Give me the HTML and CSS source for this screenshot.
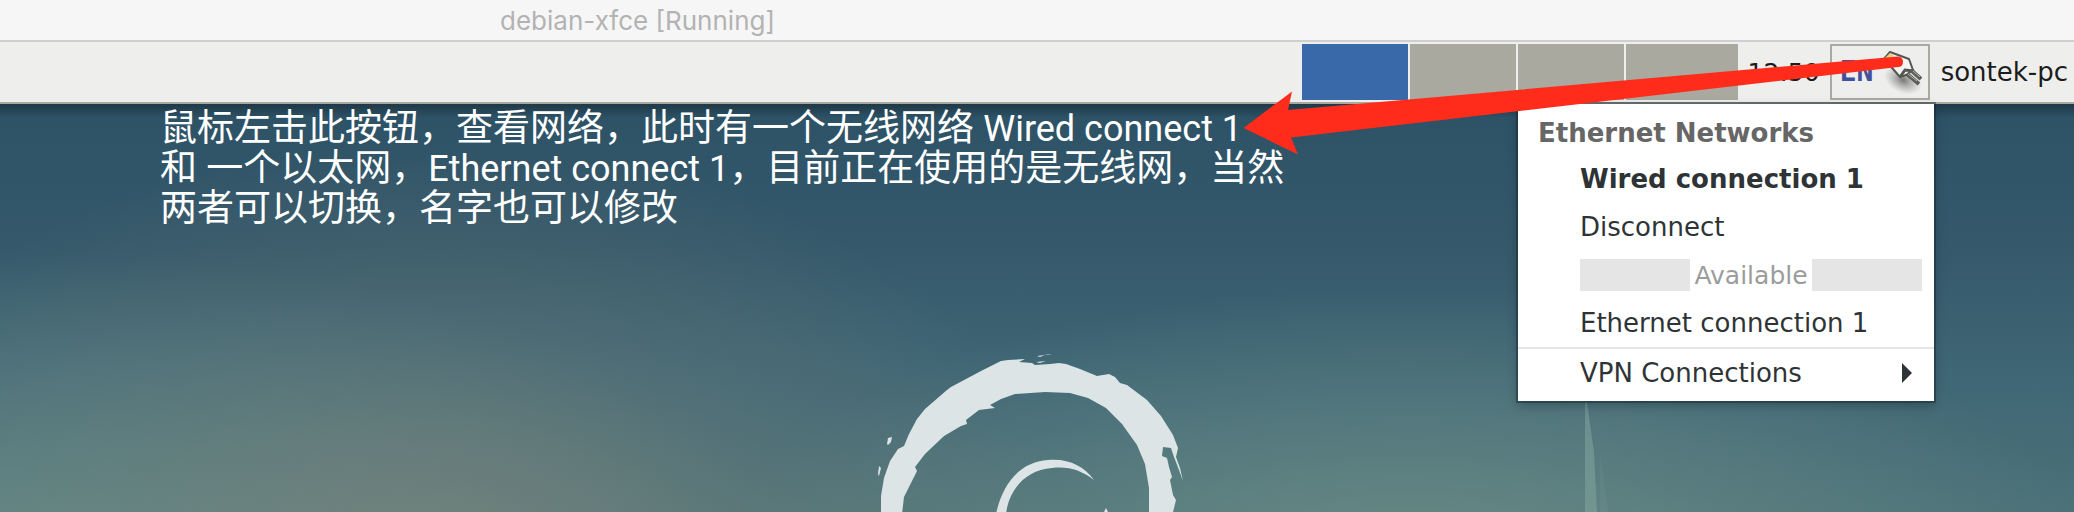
FILE: index.html
```html
<!DOCTYPE html>
<html lang="zh-CN">
<head>
<meta charset="utf-8">
<title>debian-xfce [Running]</title>
<link rel="stylesheet" href="styles.css">
</head>
<body>
<div class="window">
  <header class="titlebar"><h1 class="titlebar-text">debian-xfce [Running]</h1></header>
  <nav class="panel" aria-label="Panel">
    <div class="pager">
      <button class="workspace workspace-active" type="button" aria-label="Workspace 1"></button>
      <button class="workspace" type="button" aria-label="Workspace 2"></button>
      <button class="workspace" type="button" aria-label="Workspace 3"></button>
      <button class="workspace workspace-last" type="button" aria-label="Workspace 4"></button>
    </div>
    <time class="clock">12:50</time>
    <div class="tray">
      <button class="lang" type="button">EN</button>
      <button class="net" type="button" aria-label="Network">
        <svg class="net-icon" viewBox="0 0 44 46" aria-hidden="true">
          <defs><radialGradient id="sh"><stop offset="0" stop-color="#444" stop-opacity=".7"/><stop offset="1" stop-color="#777" stop-opacity="0"/></radialGradient></defs>
          <ellipse cx="21" cy="31" rx="20" ry="13" fill="url(#sh)" transform="rotate(25 21 31)"/>
          <path d="M8 3l19 7 4 11-7 5-6 2-7-8-9-10z" fill="#f4f4f2" stroke="#55564f" stroke-width="2" stroke-linejoin="round"/>
          <path d="M3 9l5-5 4 3-5 6z" fill="#e8cf83"/>
          <path d="M18 28l5-7 9 1" fill="none" stroke="#55564f" stroke-width="3"/>
          <path d="M25 25l12 10M29 21l10 9" stroke="#5c5c58" stroke-width="4"/>
          <path d="M26 25l9 7M31 22l7 6" stroke="#b4b4b0" stroke-width="1"/>
        </svg>
      </button>
    </div>
    <span class="host">sontek-pc</span>
  </nav>
  <main class="desktop">
    <svg class="swirl" viewBox="860 340 350 172" aria-hidden="true">
      <g fill="#dce4e6">
        <path d="M881 514V496L884 478 890 461 898 449 904 446 909 434 917 419 925 409 947 390 951 387 981 371 1001 361 1008 360 1025 359 1019 362 1032 363 1035 365 1050 364 1059 363 1066 364 1080 369 1097 376 1109 374 1115 377 1120 383 1127 385 1147 400 1161 416 1173 435 1178 448 1176 457 1180 468 1183 481 1179 470 1174 457 1171 448 1163 447 1162 456 1167 458 1169 467 1172 477 1170 480 1173 495 1176 500 1173 512V514H1149L1149 488 1145 464 1137 445 1122 424 1106 408 1088 398 1070 393 1045 392 1015 394 1001 399 990 405 995 408 979 410 966 420 967 424 961 426 944 436 925 454 915 467 917 471 904 497 902 514Z"/>
        <path d="M996 514C1002 486 1018 462 1048 460C1068 458 1084 466 1094 480C1081 470 1068 466 1052 468C1025 470 1009 490 1006 514Z"/>
        <path d="M888 438l4-1-1 5-3 3-1-1zM879 466l2 2-2 8-1-2zM1104 512l2-4 2 4zM1037 356l8-1-5 2zM1044 355l8-1-4 1zM1036 362l10-1-6 2z"/>
      </g>
    </svg>
    <svg class="beam" viewBox="0 0 24 110" preserveAspectRatio="none" aria-hidden="true"><path d="M0 0h2l7 50 3 60H0z" fill="#84aaa2" fill-opacity=".5"/><path d="M15 50l8 60h-8z" fill="#84aaa2" fill-opacity=".12"/></svg>
    <div class="note">
      <p>鼠标左击此按钮，查看网络，此时有一个无线网络 <span class="latin">Wired connect 1</span></p>
      <p>和 一个以太网，<span class="latin">Ethernet connect 1</span>，目前正在使用的是无线网，当然</p>
      <p>两者可以切换，名字也可以修改</p>
    </div>
    <div class="menu" role="menu">
      <h2 class="menu-title">Ethernet Networks</h2>
      <button class="item item-current" type="button" role="menuitem">Wired connection 1</button>
      <button class="item" type="button" role="menuitem">Disconnect</button>
      <div class="section"><span class="section-bar"></span><span>Available</span><span class="section-bar"></span></div>
      <button class="item" type="button" role="menuitem">Ethernet connection 1</button>
      <div class="rule"></div>
      <button class="item item-sub" type="button" role="menuitem">VPN Connections
        <svg class="item-arrow" viewBox="0 0 10 20" aria-hidden="true"><path d="M0 0l10 10L0 20z" fill="#2e3436"/></svg>
      </button>
    </div>
  </main>
  <svg class="arrow" viewBox="1243 56 662 100" aria-hidden="true"><path d="M1243.500 128L1292 91.500 1288 110 1898 56.500Q1903 57 1903 62T1898 67L1291 137.500 1298 154.500Z" fill="#ff2b1b"/></svg>
</div>
</body>
</html>
```
FILE: styles.css
```css
* { box-sizing: border-box; }
body { margin: 0; background: #33596b; }
h1, h2, p { margin: 0; }
button { padding: 0; border: 0; background: none; font: inherit; color: inherit; text-align: left; }
.window { position: relative; display: flex; flex-direction: column; min-height: 100vh; overflow: hidden; font-family: "DejaVu Sans", sans-serif; font-size: 26px; }
.titlebar { height: 42px; padding-left: 500px; background: #f6f6f6; border-bottom: 2px solid #cfcfcf; }
.titlebar-text { font: 400 26px/42px Inter, sans-serif; color: #b3b3b3; }
.panel { display: flex; justify-content: flex-end; align-items: center; height: 62px; padding-right: 6px; background: #eeeeec; border-bottom: 2px solid #aaa99f; color: #1c1c1c; }
.pager { display: flex; gap: 2px; }
.workspace { width: 106px; height: 56px; background: #aaa99f; }
.workspace-active { background: #3a69aa; }
.workspace-last { width: 112px; }
.clock { width: 92px; font-size: 25px; text-align: center; }
.tray { display: flex; align-items: center; width: 100px; height: 56px; padding-left: 8px; border: 2px solid #aaa99f; }
.lang { width: 42px; font: 700 28px/40px "DejaVu Sans Mono", monospace; color: #43509c; }
.net { width: 44px; height: 46px; }
.net-icon { display: block; width: 44px; height: 46px; }
.host { margin-left: 11px; }
.desktop { position: relative; flex: 1; display: flex; justify-content: space-between; align-items: flex-start; padding: 0 140px 0 160px;
  background:
    linear-gradient(rgba(16, 32, 42, .5), rgba(16, 32, 42, 0) 14px),
    radial-gradient(ellipse 640px 420px at 21% 112%, rgba(132, 134, 122, .62), rgba(132, 134, 122, .26) 50%, rgba(132, 134, 122, 0)),
    radial-gradient(ellipse 700px 290px at 68% 116%, rgba(122, 154, 142, .65), rgba(122, 154, 142, 0)),
    radial-gradient(ellipse 800px 300px at 0% 110%, rgba(110, 150, 144, .6), rgba(110, 150, 144, 0)),
    linear-gradient(#2d5266, #35596b 35%, #3f6675 65%, #4b7178); }
.swirl { position: absolute; left: 860px; bottom: 0; width: 350px; height: 172px; }
.beam { position: absolute; right: 465px; bottom: 0; width: 24px; height: 110px; }
.note { position: relative; padding-top: 5px; color: #fff; font-family: Roboto, "Noto Sans CJK SC", sans-serif; font-size: 37px; line-height: 40px; white-space: nowrap; }
.latin { font-size: 36px; }
.menu { position: relative; width: 416px; padding-bottom: 4px; background: #fff; color: #2e3436; box-shadow: 0 0 0 2px rgba(20, 40, 50, .45), 0 4px 10px rgba(10, 25, 35, .35); }
.menu-title { padding: 8px 20px 0; font-size: 26px; line-height: 43px; color: #666; }
.item { display: flex; align-items: center; width: 100%; height: 48px; padding: 0 22px 0 62px; line-height: 48px; }
.item-current { font-weight: 700; }
.section { display: flex; align-items: center; gap: 4px; height: 48px; padding: 0 12px 0 62px; font-size: 25px; color: #9a9c9c; }
.section-bar { flex: 1; height: 32px; background: #e5e5e5; }
.rule { height: 2px; background: #e5e5e5; }
.item-sub { justify-content: space-between; }
.item-arrow { width: 10px; height: 20px; }
.arrow { position: absolute; top: 56px; right: 169px; width: 662px; height: 100px; pointer-events: none; }
```
